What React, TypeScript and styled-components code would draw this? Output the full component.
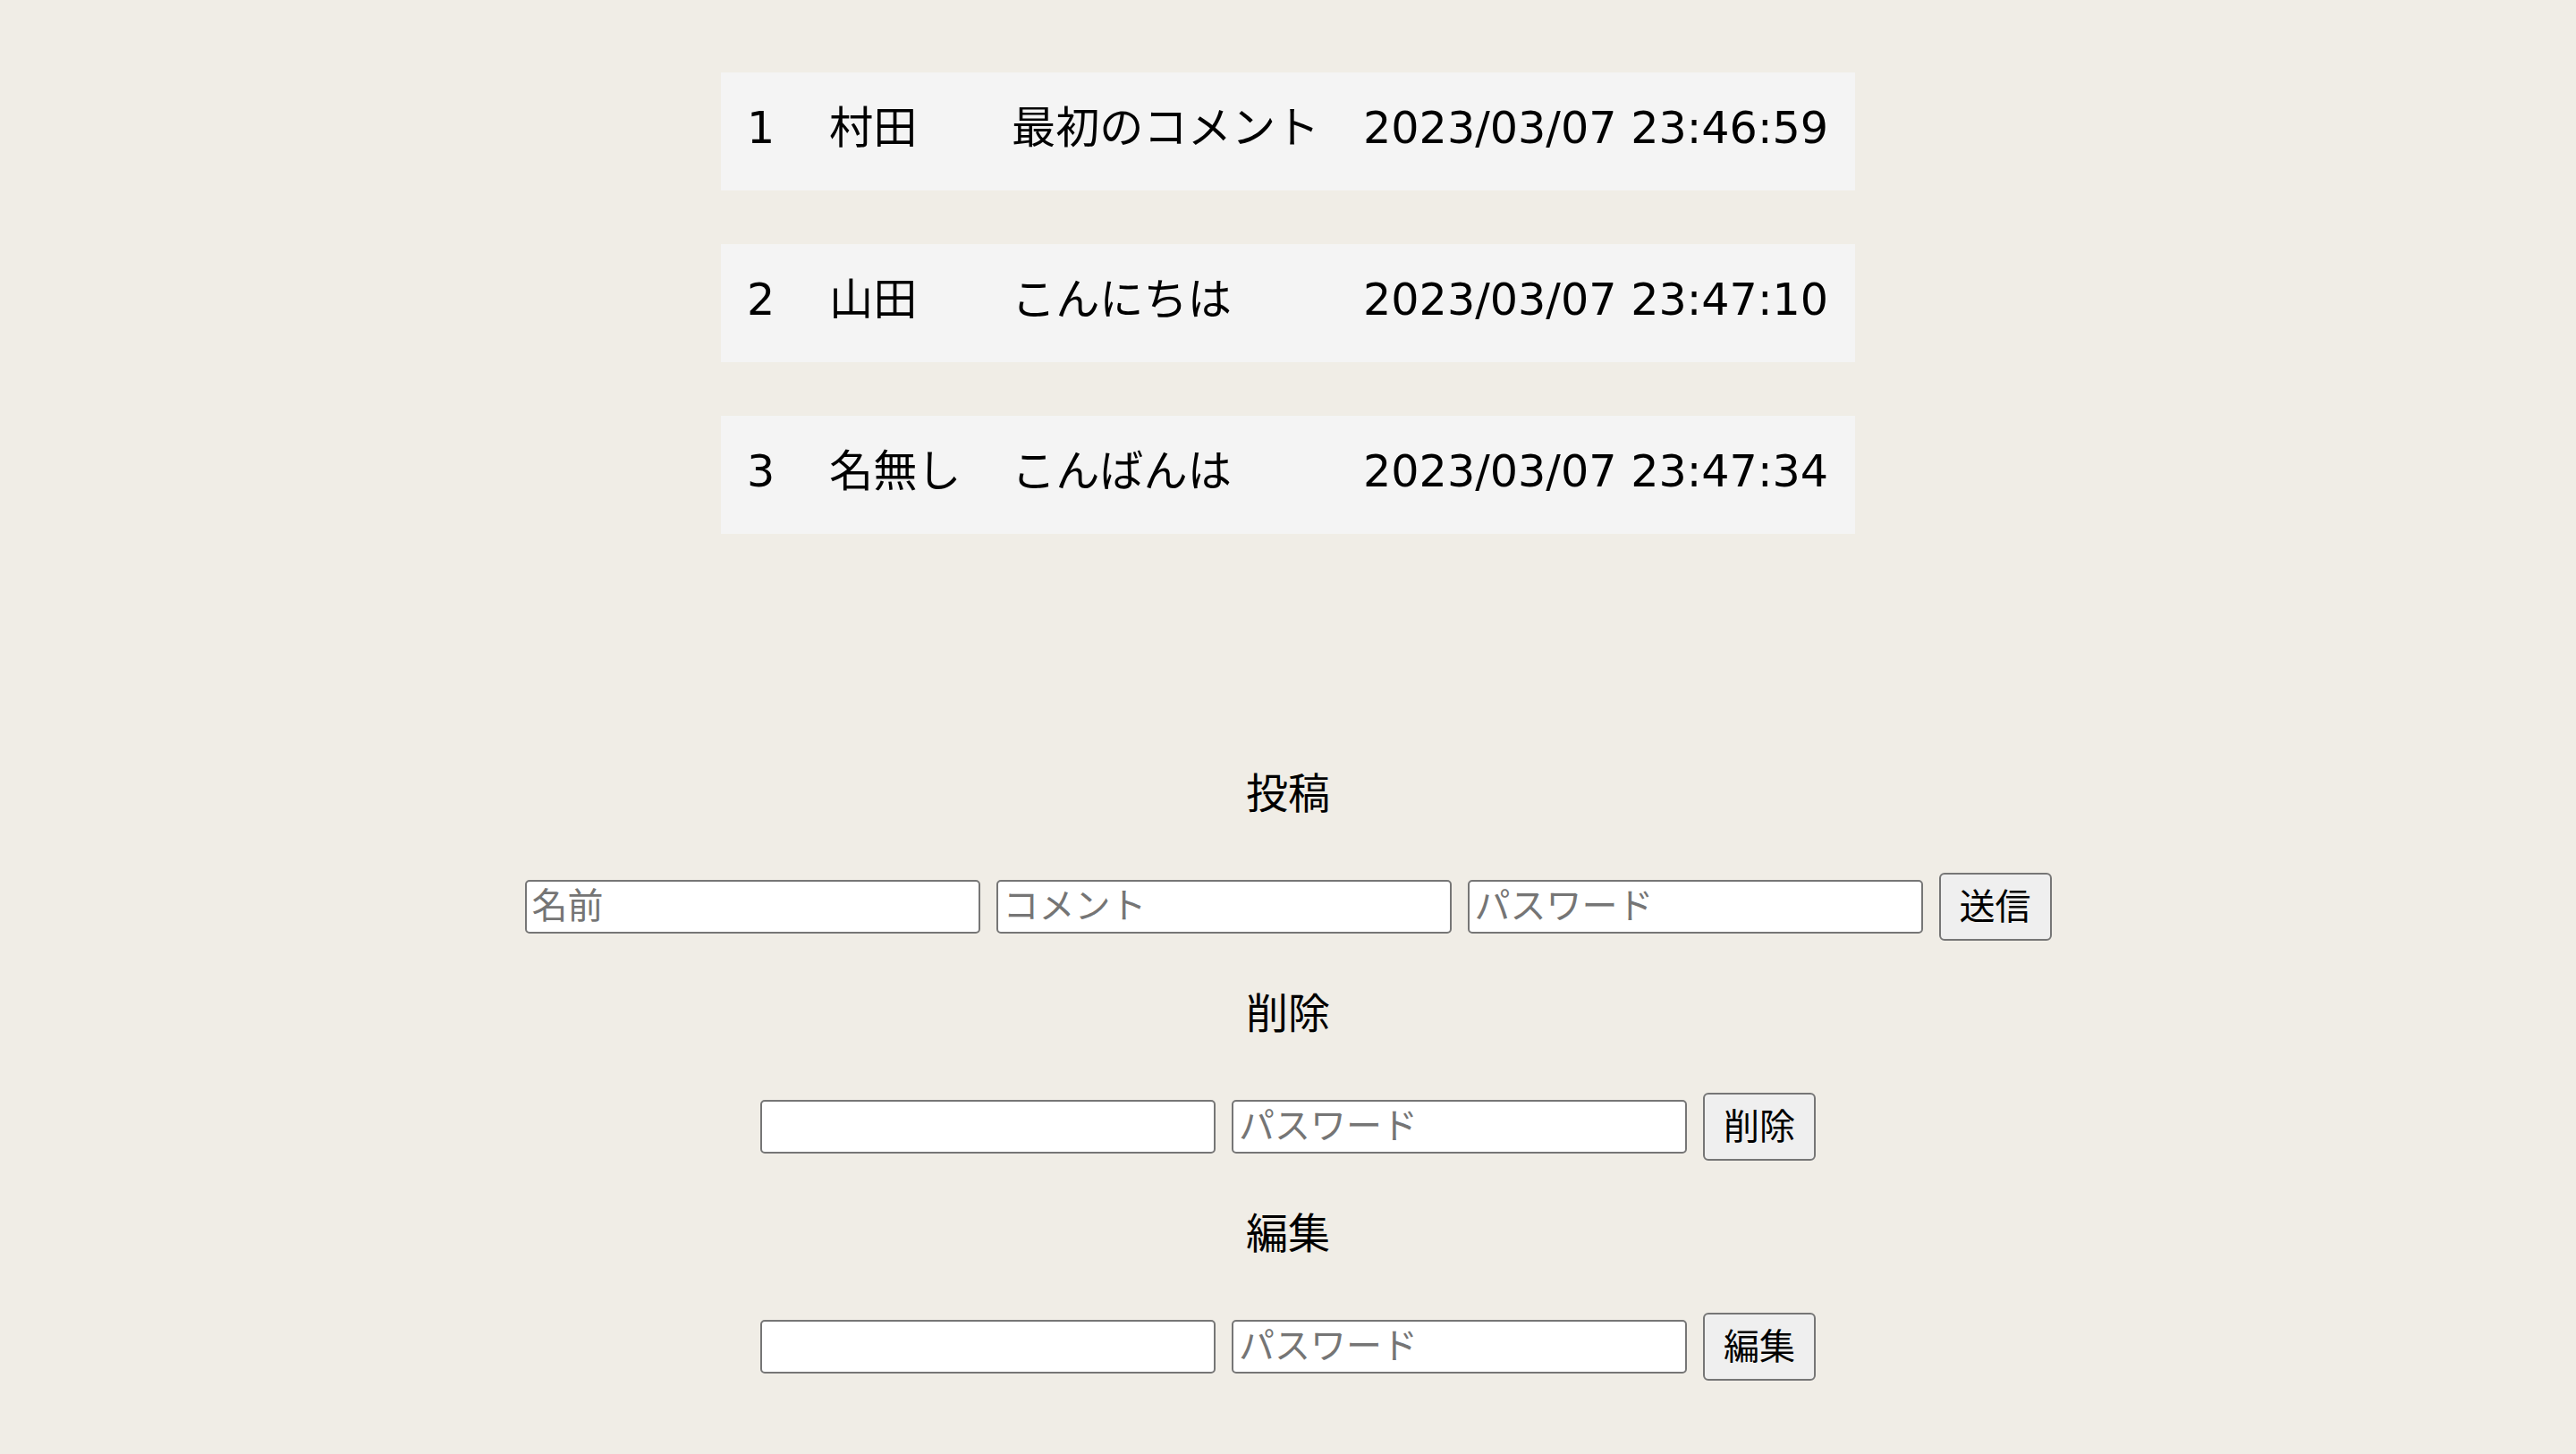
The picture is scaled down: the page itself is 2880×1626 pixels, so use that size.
import React from "react";
import styled, { createGlobalStyle } from "styled-components";

const GlobalStyle = createGlobalStyle`
  html, body {
    margin: 0;
    padding: 0;
    background: #f0ede6;
  }
  body {
    font-family: "DejaVu Sans", "Noto Sans CJK JP", sans-serif;
    color: #000;
  }
`;

const Page = styled.main`
  min-height: 1626px;
  box-sizing: border-box;
  padding-top: 81px;
  display: flex;
  flex-direction: column;
  align-items: center;
`;

const CommentList = styled.div`
  display: flex;
  flex-direction: column;
  gap: 60px;
`;

const CommentRow = styled.div`
  display: grid;
  grid-template-columns: 92px 204px 393px 579px;
  height: 132px;
  align-items: center;
  background: #f4f4f4;
`;

const Cell = styled.div`
  padding: 0 29px 7px;
  font-family: "DejaVu Sans", "Noto Sans CJK JP", sans-serif;
  font-size: 49.2px;
  line-height: 1;
  white-space: nowrap;
`;

const Forms = styled.div`
  margin-top: 259px;
  display: flex;
  flex-direction: column;
  align-items: center;
`;

const FormSection = styled.section`
  display: flex;
  flex-direction: column;
  align-items: center;
  margin-bottom: 50px;
`;

const SectionTitle = styled.h2`
  margin: 0 0 58px;
  font-family: "Noto Sans CJK JP", sans-serif;
  font-weight: 400;
  font-size: 47px;
  line-height: 56px;
  height: 62px;
`;

const FormRow = styled.form`
  display: flex;
  align-items: center;
  gap: 18px;
  height: 76px;
`;

const TextInput = styled.input`
  box-sizing: border-box;
  width: 509px;
  height: 60px;
  padding: 0 6px 8px;
  border: 2.5px solid #767676;
  border-radius: 5px;
  background: #fff;
  font-family: "Noto Sans CJK JP", sans-serif;
  font-size: 40px;
  color: #000;
  outline: none;

  &::placeholder {
    color: #757575;
  }
`;

const SubmitButton = styled.button`
  box-sizing: border-box;
  height: 76px;
  padding: 0 21px 6px;
  border: 2.5px solid #767676;
  border-radius: 6px;
  background: #efefef;
  font-family: "Noto Sans CJK JP", sans-serif;
  font-size: 40px;
  line-height: 1;
  color: #000;
`;

const comments = [
  { id: 1, name: "村田", body: "最初のコメント", date: "2023/03/07 23:46:59" },
  { id: 2, name: "山田", body: "こんにちは", date: "2023/03/07 23:47:10" },
  { id: 3, name: "名無し", body: "こんばんは", date: "2023/03/07 23:47:34" },
];

export default function App() {
  return (
    <>
      <GlobalStyle />
      <Page>
        <CommentList>
          {comments.map((c) => (
            <CommentRow key={c.id}>
              <Cell>{c.id}</Cell>
              <Cell>{c.name}</Cell>
              <Cell>{c.body}</Cell>
              <Cell>{c.date}</Cell>
            </CommentRow>
          ))}
        </CommentList>

        <Forms>
          <FormSection>
            <SectionTitle>投稿</SectionTitle>
            <FormRow onSubmit={(e) => e.preventDefault()}>
              <TextInput placeholder="名前" />
              <TextInput placeholder="コメント" />
              <TextInput type="text" placeholder="パスワード" />
              <SubmitButton type="submit">送信</SubmitButton>
            </FormRow>
          </FormSection>

          <FormSection>
            <SectionTitle>削除</SectionTitle>
            <FormRow onSubmit={(e) => e.preventDefault()}>
              <TextInput />
              <TextInput type="text" placeholder="パスワード" />
              <SubmitButton type="submit">削除</SubmitButton>
            </FormRow>
          </FormSection>

          <FormSection>
            <SectionTitle>編集</SectionTitle>
            <FormRow onSubmit={(e) => e.preventDefault()}>
              <TextInput />
              <TextInput type="text" placeholder="パスワード" />
              <SubmitButton type="submit">編集</SubmitButton>
            </FormRow>
          </FormSection>
        </Forms>
      </Page>
    </>
  );
}
